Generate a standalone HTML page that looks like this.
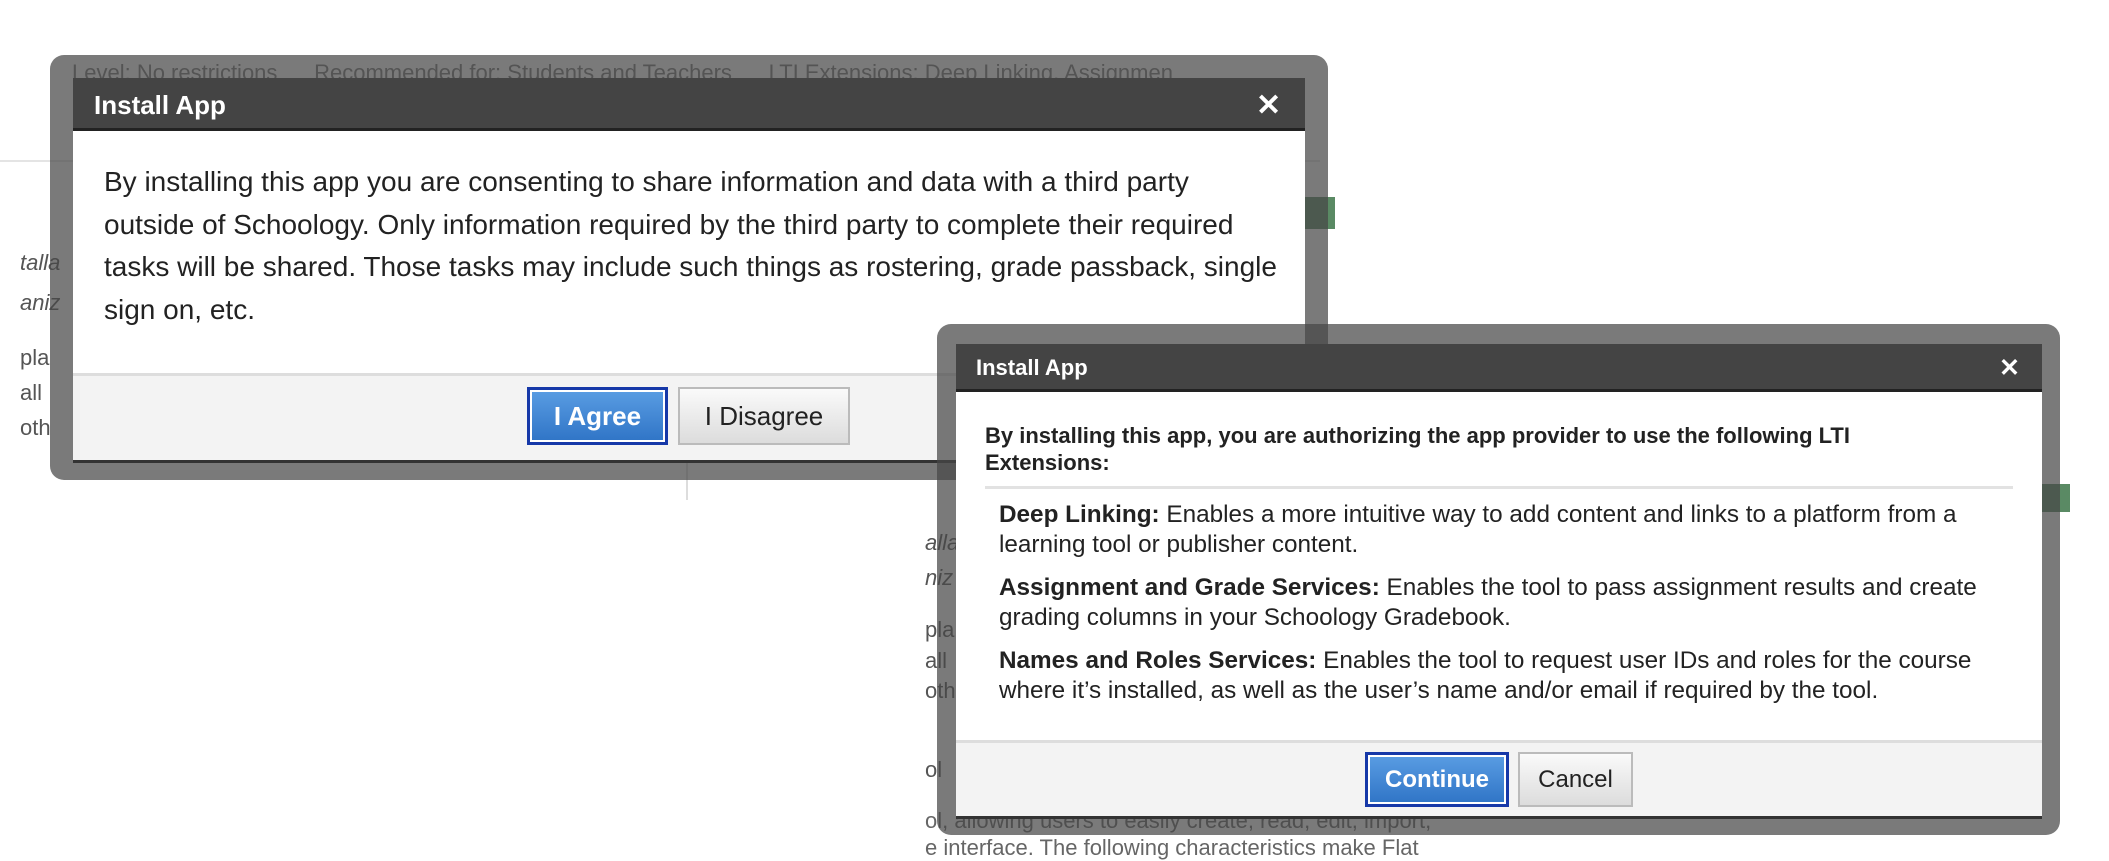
<!DOCTYPE html>
<html><head><meta charset="utf-8"><style>
*{margin:0;padding:0;box-sizing:border-box}
body{width:2109px;height:849px;background:#fff;position:relative;overflow:hidden;font-family:"Liberation Sans",Arial,sans-serif;color:#222}
.bg{position:absolute;color:#888;font-size:22px;white-space:nowrap}
.ov{position:absolute;background:rgba(70,70,70,0.72);border-radius:14px}
.hd{position:absolute;background:#444;color:#fff;font-weight:bold;border-bottom:3px solid #222}
.bd{position:absolute;background:#fff}
.ft{position:absolute;background:#f3f3f3;border-top:3px solid #ddd;border-bottom:3px solid #333}
.btn{position:absolute;font-size:26px;display:flex;align-items:center;justify-content:center}
.blue{background:linear-gradient(#5a9de3,#2f74c6);color:#fff;font-weight:bold;border:3px solid #1638a8;box-shadow:0 0 0 2px #fff inset}
.gray{background:linear-gradient(#fafafa,#dcdcdc);color:#222;border:2px solid #bbb}
.x{position:absolute;color:#fff;font-weight:bold}
</style></head><body>
<div class="bg" style="left:72px;top:60px;color:#777">Level: No restrictions &nbsp;&nbsp;&nbsp;&nbsp; Recommended for: Students and Teachers &nbsp;&nbsp;&nbsp;&nbsp; LTI Extensions: Deep Linking, Assignmen</div>
<div style="position:absolute;left:0;top:160px;width:1320px;height:2px;background:#e4e4e4"></div>
<div class="bg" style="left:20px;top:250px;font-style:italic;color:#555">talla</div>
<div class="bg" style="left:20px;top:290px;font-style:italic;color:#555">aniz</div>
<div class="bg" style="left:20px;top:345px;color:#555">pla</div>
<div class="bg" style="left:20px;top:380px;color:#555">all</div>
<div class="bg" style="left:20px;top:415px;color:#555">oth</div>
<div style="position:absolute;left:1305px;top:197px;width:30px;height:32px;background:#5a8a64"></div>
<div style="position:absolute;left:2040px;top:484px;width:30px;height:28px;background:#5a8a64"></div>
<div style="position:absolute;left:686px;top:460px;width:2px;height:40px;background:#ddd"></div>
<div class="bg" style="left:925px;top:530px;font-style:italic;color:#555">alla</div>
<div class="bg" style="left:925px;top:565px;font-style:italic;color:#555">niz</div>
<div class="bg" style="left:925px;top:617px;color:#555">pla</div>
<div class="bg" style="left:925px;top:648px;color:#555">all</div>
<div class="bg" style="left:925px;top:678px;color:#555">oth</div>
<div class="bg" style="left:925px;top:757px;color:#555">ol</div>
<div class="bg" style="left:925px;top:808px;color:#666">ol, allowing users to easily create, read, edit, import,</div>
<div class="bg" style="left:925px;top:835px;color:#666">e interface. The following characteristics make Flat</div>

<!-- dialog 1 -->
<div class="ov" style="left:50px;top:55px;width:1278px;height:425px"></div>
<div class="hd" style="left:73px;top:78px;width:1232px;height:53px;font-size:26px;padding:12px 0 0 21px">Install App</div>
<div class="x" style="left:1256px;top:88px;font-size:30px">✕</div>
<div class="bd" style="left:73px;top:131px;width:1232px;height:242px">
<div style="position:absolute;left:31px;top:30px;width:1200px;font-size:28px;line-height:42.5px;white-space:nowrap">By installing this app you are consenting to share information and data with a third party<br>outside of Schoology. Only information required by the third party to complete their required<br>tasks will be shared. Those tasks may include such things as rostering, grade passback, single<br>sign on, etc.</div>
</div>
<div class="ft" style="left:73px;top:373px;width:1232px;height:90px"></div>
<div class="btn blue" style="left:527px;top:387px;width:141px;height:58px">I Agree</div>
<div class="btn gray" style="left:678px;top:387px;width:172px;height:58px">I Disagree</div>

<!-- dialog 2 -->
<div class="ov" style="left:937px;top:324px;width:1123px;height:511px"></div>
<div class="hd" style="left:956px;top:344px;width:1086px;height:48px;font-size:22px;padding:11px 0 0 20px">Install App</div>
<div class="x" style="left:1999px;top:353px;font-size:25px">✕</div>
<div class="bd" style="left:956px;top:392px;width:1086px;height:348px">
<div style="position:absolute;left:29px;top:30px;width:1050px;font-size:22px;line-height:27px;font-weight:bold;color:#222;white-space:nowrap">By installing this app, you are authorizing the app provider to use the following LTI<br>Extensions:</div>
<div style="position:absolute;left:29px;top:94px;width:1028px;height:3px;background:#e2e2e2"></div>
<div style="position:absolute;left:43px;top:108px;width:1040px;font-size:24.3px;line-height:29.5px;white-space:nowrap">
<div style="margin-bottom:14px"><b>Deep Linking:</b> Enables a more intuitive way to add content and links to a platform from a<br>learning tool or publisher content.</div>
<div style="margin-bottom:14px"><b>Assignment and Grade Services:</b> Enables the tool to pass assignment results and create<br>grading columns in your Schoology Gradebook.</div>
<div><b>Names and Roles Services:</b> Enables the tool to request user IDs and roles for the course<br>where it’s installed, as well as the user’s name and/or email if required by the tool.</div>
</div>
</div>
<div class="ft" style="left:956px;top:740px;width:1086px;height:79px"></div>
<div class="btn blue" style="left:1365px;top:752px;width:144px;height:55px;font-size:24px">Continue</div>
<div class="btn gray" style="left:1518px;top:752px;width:115px;height:55px;font-size:24px">Cancel</div>
</body></html>
